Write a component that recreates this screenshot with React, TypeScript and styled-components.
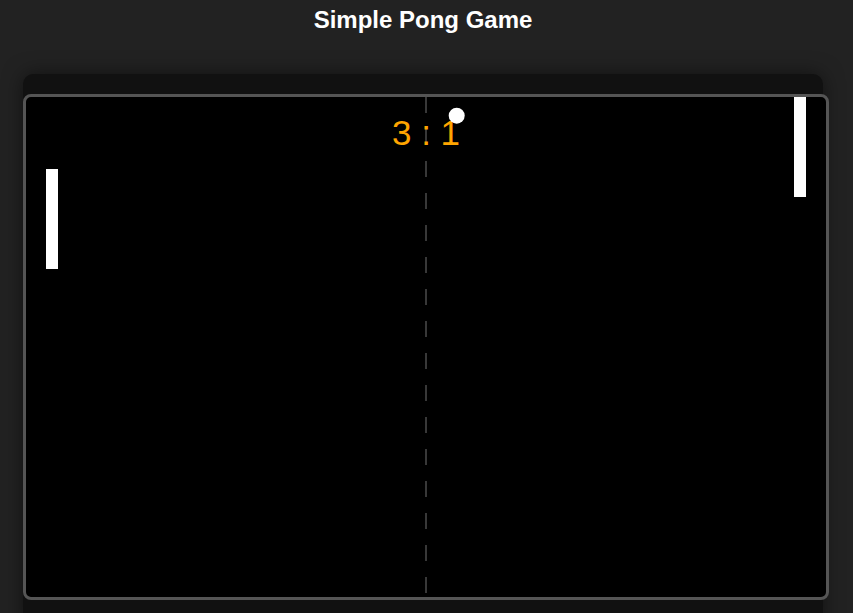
import React from "react";
import styled, { createGlobalStyle } from "styled-components";

const Global = createGlobalStyle`
  html, body {
    margin: 0;
    padding: 0;
    background: #222222;
    overflow: hidden;
  }
  body {
    font-family: "Liberation Sans", Arial, sans-serif;
  }
`;

const Page = styled.div`
  display: flex;
  flex-direction: column;
  align-items: flex-start;
  padding: 6px 0 0 23px;
  height: 613px;
  box-sizing: border-box;
`;

const Title = styled.h1`
  margin: 0 0 40px 0;
  width: 800px;
  text-align: center;
  font-size: 24px;
  line-height: 28px;
  font-weight: bold;
  color: #ffffff;
`;

const Card = styled.div`
  width: 800px;
  padding: 20px 0 30px 0;
  background: #111111;
  border-radius: 10px;
  box-shadow: 0 0 20px rgba(0, 0, 0, 0.5);
`;

const Frame = styled.div`
  width: 800px;
  height: 500px;
  border: 3px solid #555555;
  border-radius: 8px;
  background: #000000;
  overflow: hidden;
`;

const Board = styled.svg`
  display: block;
`;

type Paddle = { x: number; y: number };

const paddles: Paddle[] = [
  { x: 20, y: 72 },
  { x: 768, y: 0 },
];

export default function App() {
  return (
    <>
      <Global />
      <Page>
        <Title>Simple Pong Game</Title>
        <Card>
          <Frame>
            <Board width={800} height={500} viewBox="0 0 800 500">
              <line
                x1={400}
                y1={0}
                x2={400}
                y2={500}
                stroke="#383838"
                strokeWidth={2}
                strokeDasharray="16 16"
              />
              <text
                x={400}
                y={48}
                textAnchor="middle"
                fill="#FFA500"
                fontSize={35}
                fontFamily='"Liberation Sans", Arial, sans-serif'
              >
                3 : 1
              </text>
              {paddles.map((p, i) => (
                <rect key={i} x={p.x} y={p.y} width={12} height={100} fill="#ffffff" />
              ))}
              <circle cx={430.7} cy={18.7} r={8} fill="#ffffff" />
            </Board>
          </Frame>
        </Card>
      </Page>
    </>
  );
}
